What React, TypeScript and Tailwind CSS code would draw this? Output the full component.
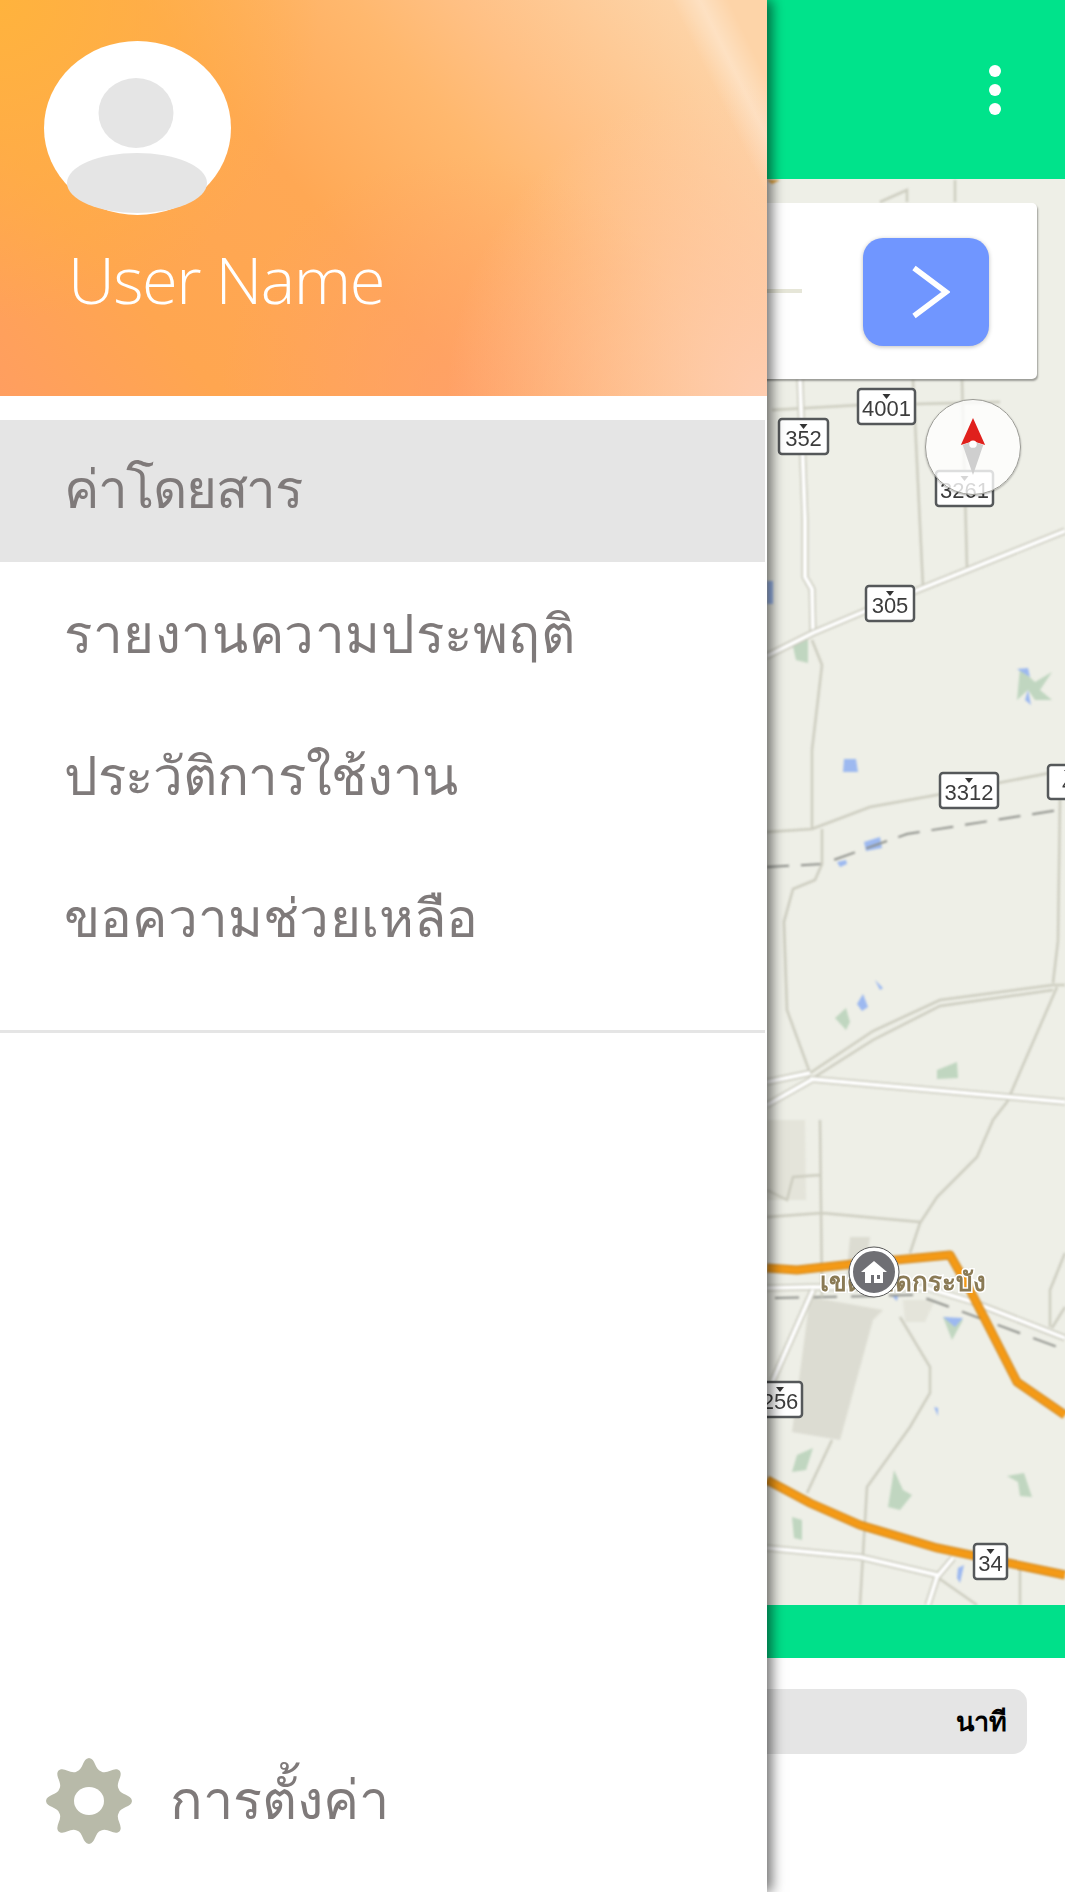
import React from 'react';

const thai = { fontFamily: '"Noto Sans", "DejaVu Sans", "Liberation Sans", sans-serif' };

const menuItems = [
  { label: 'ค่าโดยสาร', track: '-1.3px', offset: 'pb-[6px]' },
  { label: 'รายงานความประพฤติ', track: '0.6px', offset: '' },
  { label: 'ประวัติการใช้งาน', track: '-0.3px', offset: '' },
  { label: 'ขอความช่วยเหลือ', track: '0.2px', offset: '' },
];

function Shield({ x, y, w, h, label }: { x: number; y: number; w: number; h: number; label: string }) {
  const cx = x + w / 2;
  return (
    <g className="blur-[0.35px]">
      <rect x={x} y={y} width={w} height={h} rx={3} fill="#fff" stroke="#55585a" strokeWidth={2.5} />
      <path d={`M${cx - 4} ${y + 5}h8l-4 5z`} fill="#333" />
      <text x={cx} y={y + h - 8} textAnchor="middle" fontSize={22} fill="#3c3c3c" fontFamily="Liberation Sans, sans-serif">
        {label}
      </text>
    </g>
  );
}

function road(d: string, key: string) {
  return (
    <g key={key} fill="none" strokeLinejoin="round">
      <path d={d} stroke="#cbcbbe" strokeWidth={7} />
      <path d={d} stroke="#fff" strokeWidth={4} />
    </g>
  );
}

function MapArt() {
  const tan = [
    'M772 410L860 405M915 404L1000 402',
    'M913 380L923 587M962 380L967 568',
    'M812 640L822 665L812 750L812 828',
    'M767 832L812 829L870 807L942 794L1065 770',
    'M822 829L822 864L815 880L793 889L784 922L787 1010L810 1073',
    'M1060 799L1058 941L1053 983',
    'M810 1073L873 1031L940 1000L1053 985L1065 985',
    'M810 1080L873 1040L940 1006L1053 990',
    'M1057 987L1007 1102L993 1120L977 1157L937 1197L920 1223L910 1253',
    'M820 1120L822 1297M767 1217L822 1213L920 1222M767 1190L787 1200L793 1177L820 1175',
    'M900 1317L930 1367L930 1393L910 1427L867 1487L860 1605',
    'M832 1440L807 1493',
    'M937 1577L977 1605M1020 1567L1020 1605',
    'M1065 1253L1050 1290L1050 1327M1065 1307L1052 1328',
    'M880 202L907 190L907 202M955 180L955 202',
  ];
  const white = [
    'M800 380L805 520L805 577L812 589L813 633',
    'M767 656L813 633L863 612L1065 531',
    'M810 1079L1065 1102M767 1082L810 1073M767 1105L813 1079',
    'M767 1288L813 1287L927 1288L973 1302L1065 1338',
    'M813 1290L773 1380L767 1410',
    'M767 1548L860 1557L937 1575M953 1558L937 1577L928 1605',
  ];
  return (
    <svg viewBox="0 179 1065 1426" className="block w-[1065px] h-[1426px]">
      <rect x="0" y="179" width="1065" height="1426" fill="#eeefe7" />
      <g className="blur-[0.8px]">
        <path d="M810 1297L883 1310L873 1320L840 1440L792 1432Z" fill="#dcdcd2" />
        <path d="M850 1237L870 1237L862 1290L845 1290Z" fill="#dcdcd2" />
        <path d="M767 1120L805 1120L806 1200L767 1200Z" fill="#e4e4da" />
        <path d="M903 1300L935 1300L925 1322L905 1322Z" fill="#e4e4da" />
        <path d="M792 642L808 633L808 663L796 660Z M835 1018L846 1008L850 1022L846 1030Z M937 1070L957 1062L958 1078L937 1079Z M797 1455L813 1448L806 1470L792 1472Z M1007 1476L1024 1473L1032 1497L1020 1496L1018 1482Z M792 1517L802 1520L802 1540L794 1538Z M894 1470L903 1490L912 1495L900 1510L888 1507Z M943 1317L963 1320L952 1340Z M1020 668L1035 682L1052 672L1040 690L1052 700L1035 700L1028 690L1017 700Z" fill="#c0d6c0" />
        <path d="M767 581L773 581L773 604L767 604Z M844 759L856 759L858 772L843 772Z M864 842L880 837L882 848L866 851Z M837 862L846 860L847 864L840 867Z M875 980L883 988L880 990Z M857 1004L863 994L868 1007L862 1011Z M1017 669L1028 668L1030 677Z M1025 700L1028 690L1031 705Z M943 1317L963 1318L955 1327Z M892 1296L898 1296L897 1301Z M934 1407L938 1408L938 1416Z M958 1568L964 1565L960 1583L957 1578Z" fill="#9db9f0" />
        <path d="M767 867L822 864L907 834L1065 809" fill="none" stroke="#8d8f8a" strokeWidth={2} strokeDasharray="22 12" />
        <path d="M775 1298L917 1295L1060 1348L1062 1340" fill="none" stroke="#8d8f8a" strokeWidth={2} strokeDasharray="24 14" />
        {tan.map((d, i) => (
          <path key={i} d={d} fill="none" stroke="#cdcdc0" strokeWidth={2.5} />
        ))}
        {white.map((d, i) => road(d, 'w' + i))}
        <path d="M767 1268L797 1270L853 1264L950 1255L970 1290L1017 1382L1065 1415" fill="none" stroke="#d28a22" strokeWidth={9} strokeLinejoin="round" />
        <path d="M767 1268L797 1270L853 1264L950 1255L970 1290L1017 1382L1065 1415" fill="none" stroke="#f49a16" strokeWidth={6.5} strokeLinejoin="round" />
        <path d="M767 1480L810 1503L860 1525L937 1548L1065 1575" fill="none" stroke="#d28a22" strokeWidth={9} />
        <path d="M767 1480L810 1503L860 1525L937 1548L1065 1575" fill="none" stroke="#f49a16" strokeWidth={6.5} />
        <path d="M767 180L780 180L772 184Z" fill="#e8a840" />
      </g>
      <Shield x={858} y={389} w={57} h={35} label="4001" />
      <Shield x={779} y={419} w={49} h={35} label="352" />
      <Shield x={936} y={471} w={57} h={35} label="3261" />
      <Shield x={866} y={586} w={48} h={35} label="305" />
      <Shield x={940} y={773} w={58} h={35} label="3312" />
      <Shield x={1048} y={765} w={40} h={34} label="4" />
      <Shield x={758} y={1382} w={44} h={35} label="256" />
      <Shield x={974} y={1544} w={33} h={35} label="34" />
      <text
        x={820}
        y={1291}
        fontSize={26}
        fontWeight={700}
        fill="#8a7a55"
        stroke="#fff"
        strokeWidth={3}
        paintOrder="stroke"
        className="blur-[0.4px]"
        style={thai}
      >
        เขตลาดกระบัง
      </text>
      <circle cx={874} cy={1272} r={23} fill="#6f6f74" stroke="#fff" strokeWidth={4} />
      <circle cx={874} cy={1272} r={25} fill="none" stroke="#555" strokeWidth={1} />
      <path d="M861 1272L874 1261L887 1272L883 1272L883 1283L865 1283L865 1272Z" fill="#fff" />
      <path d="M871 1275h3v8h-3zM877 1275h3v4h-3z" fill="#6f6f74" />
    </svg>
  );
}

function Gear() {
  const teeth = 8;
  const step = (Math.PI * 2) / teeth;
  const p = (r: number, t: number) => `${(44 + r * Math.cos(t)).toFixed(1)} ${(44 + r * Math.sin(t)).toFixed(1)}`;
  const pts: string[] = [];
  for (let i = 0; i < teeth; i++) {
    const a = i * step - Math.PI / 2;
    pts.push(`${i === 0 ? 'M' : 'L'}${p(32, a - step * 0.5)}`);
    pts.push(`C${p(32, a - step * 0.22)} ${p(43, a - step * 0.2)} ${p(43, a)}`);
    pts.push(`C${p(43, a + step * 0.2)} ${p(32, a + step * 0.22)} ${p(32, a + step * 0.5)}`);
  }
  return (
    <svg viewBox="0 0 88 88" className="w-[88px] h-[88px] shrink-0">
      <path d={pts.join(' ') + 'Z'} fill="#b8baa9" />
      <ellipse cx="44" cy="44" rx="15" ry="14" fill="#fff" />
    </svg>
  );
}

export default function App() {
  return (
    <div className="relative w-[1065px] h-[1892px] overflow-hidden bg-white" style={thai}>
      {/* Page behind the drawer */}
      <div className="flex flex-col h-full">
        <div className="h-[179px] bg-[#00e38b] flex items-center justify-end pr-[64px]">
          <div className="flex flex-col gap-[7px]">
            <span className="w-3 h-3 rounded-full bg-white" />
            <span className="w-3 h-3 rounded-full bg-white" />
            <span className="w-3 h-3 rounded-full bg-white" />
          </div>
        </div>
        <div className="relative h-[1426px]">
          <MapArt />
          <div className="absolute top-[24px] right-[28px] w-[437px] h-[176px] bg-white rounded-[5px] shadow-[1px_2px_2px_rgba(0,0,0,0.35)] flex items-center pr-[48px]">
            <div className="w-[202px] h-1 bg-[#e6e6d8]" />
            <button className="ml-auto mt-[2px] w-[126px] h-[108px] rounded-[20px] bg-[#7096ff] shadow-[0_1px_4px_rgba(0,0,0,0.25)] flex items-center justify-center">
              <svg viewBox="0 0 40 56" className="w-[40px] h-[56px] ml-[8px]" fill="none" stroke="#fff" strokeWidth={5.5}>
                <path d="M4 4L36 28L4 52" />
              </svg>
            </button>
          </div>
          <div className="absolute left-[925px] top-[220px] w-[96px] h-[96px] rounded-full bg-white/80 border border-[#9a9a94] shadow-[0_1px_2px_rgba(0,0,0,0.3)] flex items-center justify-center">
            <svg viewBox="0 0 30 62" className="w-[28px] h-[58px] -mt-[2px]">
              <path d="M15 1L28 30L15 26L2 30Z" fill="#e0201c" />
              <path d="M4 30L15 62L26 30L15 26Z" fill="#cfcfcf" />
              <circle cx="15" cy="29" r="4" fill="#fff" />
            </svg>
          </div>
        </div>
        <div className="h-[53px] bg-[#00e08a]" />
        <div className="flex justify-end pr-[38px] pt-[31px]">
          <div className="w-[400px] h-[65px] rounded-[14px] bg-[#e5e5e5] flex items-center justify-end pr-[20px]">
            <span className="text-[27px] font-bold text-black">นาที</span>
          </div>
        </div>
      </div>

      {/* Drawer */}
      <aside className="absolute left-0 top-0 w-[767px] h-full bg-white flex flex-col shadow-[5px_0_12px_rgba(0,0,0,0.55)]">
        <header className="relative h-[396px] shrink-0 pl-[44px] pt-[41px] bg-[linear-gradient(64deg,transparent_90%,rgba(255,255,255,0.3)_93%,transparent_96%),radial-gradient(circle_at_0_0,#ffb33d_0%,rgba(255,179,61,0)_320px),radial-gradient(circle_at_100%_100%,rgba(254,205,176,1)_0%,rgba(254,205,176,0)_320px),radial-gradient(circle_at_60%_100%,rgba(255,158,110,0.7)_0%,rgba(255,158,110,0)_240px),linear-gradient(50deg,#ff9e60_0%,#ffa650_20%,#ffa854_43%,#ffb86e_62%,#ffc084_72%,#fdd4a8_92%)]">
          <svg viewBox="0 0 187 174" className="block w-[187px] h-[174px]">
            <ellipse cx="93.5" cy="87" rx="93.5" ry="87" fill="#fff" />
            <ellipse cx="92" cy="72" rx="37.5" ry="35" fill="#e5e5e5" />
            <ellipse cx="93" cy="142" rx="70" ry="30" fill="#e5e5e5" />
          </svg>
          <div
            className="ml-[24px] mt-[24px] text-[65px] leading-[80px] font-light tracking-[-1.5px] text-white"
            style={{ fontFamily: '"Open Sans", sans-serif' }}
          >
            User Name
          </div>
        </header>

        <nav className="mt-[24px] flex flex-col w-[765px] border-b-[3px] border-[#e5e5e5] pb-[42px]">
          {menuItems.map((item, i) => (
            <div
              key={item.label}
              className={`h-[142px] pl-[64px] flex items-center text-[53px] font-light text-[#7f7a7a] ${item.offset} ${i === 0 ? 'bg-[#e5e5e5]' : ''}`}
              style={{ letterSpacing: item.track }}
            >
              {item.label}
            </div>
          ))}
        </nav>

        <div className="mt-auto pb-[47px] pl-[45px] flex items-center gap-[37px]">
          <Gear />
          <span className="-mt-[6px] text-[54px] font-light text-[#7f7a7a]">การตั้งค่า</span>
        </div>
      </aside>
    </div>
  );
}
